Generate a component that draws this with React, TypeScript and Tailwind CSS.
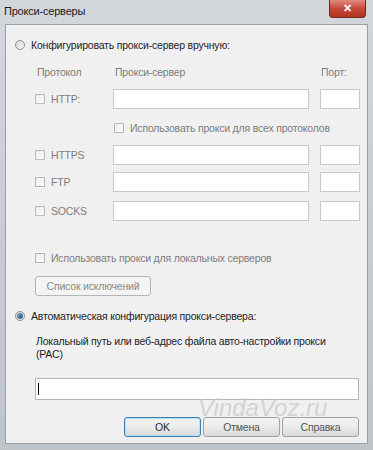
import React from "react";

const font = { fontFamily: '"Liberation Sans", Arial, sans-serif' };

function Checkbox() {
  return (
    <span className="block w-[10px] h-[10px] shrink-0 border border-[#b9b9b9] bg-gradient-to-br from-[#eeeeee] to-[#fafafa]" />
  );
}

function Radio({ checked }: { checked?: boolean }) {
  return (
    <span className="flex items-center justify-center w-[10px] h-[10px] shrink-0 rounded-full border border-[#8f8f8f] bg-gradient-to-br from-[#d9d9d9] to-[#f7f7f7]">
      {checked && (
        <span className="block w-[6px] h-[6px] rounded-full bg-gradient-to-br from-[#7aa6cc] to-[#1d4f7a]" />
      )}
    </span>
  );
}

function Field({ w }: { w: string }) {
  return <div className={`${w} h-[20px] shrink-0 border border-[#c9c9c9] bg-white`} />;
}

function ProtoRow({ label, mt }: { label: string; mt: string }) {
  return (
    <div className={`flex items-center h-[20px] ${mt} pl-[29px]`}>
      <div className="flex items-center gap-[6px] w-[78px] shrink-0">
        <Checkbox />
        <span className="text-[#7d7d7d]">{label}</span>
      </div>
      <Field w="w-[196px]" />
      <div className="w-[11px] shrink-0" />
      <Field w="w-[40px]" />
    </div>
  );
}

function Btn({ children, focus }: { children: React.ReactNode; focus?: boolean }) {
  return (
    <div
      className={`w-[77px] h-[20px] shrink-0 flex items-center justify-center whitespace-nowrap rounded-[3px] border bg-gradient-to-b from-[#f3f3f3] via-[#ebebeb] to-[#d8d8d8] ${
        focus ? "border-[#3c7fb1] shadow-[inset_0_0_0_1px_#b6e0f7] text-[#2a2a2a]" : "border-[#a3a3a3] text-[#555555]"
      }`}
    >
      {children}
    </div>
  );
}

export default function App() {
  return (
    <div
      className="w-[373px] h-[450px] bg-gradient-to-b from-[#d3d7dc] to-[#bfc4c9] flex flex-col overflow-hidden text-[10.5px] leading-none tracking-[-0.2px]"
      style={font}
    >
      {/* title bar */}
      <div className="relative h-[24px] shrink-0">
        <span className="absolute left-[4px] top-[6px] text-[11px] text-[#1a1a1a]">Прокси-серверы</span>
        <div className="absolute right-[7px] top-0 w-[37px] h-[18px] rounded-b-[4px] border border-t-0 border-[#6e2a22] bg-gradient-to-b from-[#e08a7c] via-[#c7493a] to-[#b3341f] flex items-center justify-center">
          <span className="text-white text-[11px] font-bold">✕</span>
        </div>
      </div>

      {/* client area */}
      <div className="relative mx-[5px] h-[420px] border border-[#9aa0a6] bg-[#f0f0f0] flex flex-col shrink-0 text-[#1e1e1e] whitespace-nowrap">
        <div className="flex items-center h-[14px] gap-[6px] pl-[9px] mt-[13px]">
          <Radio />
          <span>Конфигурировать прокси-сервер вручную:</span>
        </div>

        <div className="flex items-center h-[14px] mt-[13px] pl-[31px] text-[#7d7d7d]">
          <span className="w-[78px] shrink-0">Протокол</span>
          <span className="w-[206px] shrink-0">Прокси-сервер</span>
          <span>Порт:</span>
        </div>

        <ProtoRow label="HTTP:" mt="mt-[10px]" />

        <div className="flex items-center h-[14px] gap-[6px] pl-[108px] mt-[12px]">
          <Checkbox />
          <span className="text-[#7d7d7d]">Использовать прокси для всех протоколов</span>
        </div>

        <ProtoRow label="HTTPS" mt="mt-[10px]" />
        <ProtoRow label="FTP" mt="mt-[7px]" />
        <ProtoRow label="SOCKS" mt="mt-[9px]" />

        <div className="flex items-center h-[14px] gap-[6px] pl-[29px] mt-[30px]">
          <Checkbox />
          <span className="text-[#7d7d7d]">Использовать прокси для локальных серверов</span>
        </div>

        <div className="ml-[29px] mt-[11px] w-[116px] h-[20px] flex items-center justify-center rounded-[3px] border border-[#b5b5b5] bg-[#f4f4f4] text-[#8a8a8a]">
          Список исключений
        </div>

        <div className="flex items-center h-[14px] gap-[6px] pl-[9px] mt-[13px]">
          <Radio checked />
          <span>Автоматическая конфигурация прокси-сервера:</span>
        </div>

        <div className="pl-[30px] mt-[12px] h-[26px] leading-[13px]">
          Локальный путь или веб-адрес файла авто-настройки прокси
          <br />
          (PAC)
        </div>

        <div className="ml-[29px] mt-[17px] w-[324px] h-[22px] border border-[#b4b4b4] bg-white flex items-center pl-[2px]">
          <span className="block w-px h-[12px] bg-black" />
        </div>

        <div className="flex gap-[2px] pl-[118px] mt-[17px]">
          <Btn focus>OK</Btn>
          <Btn>Отмена</Btn>
          <Btn>Справка</Btn>
        </div>

        {/* watermark */}
        <span className="absolute left-[192px] top-[371px] text-[24px] italic tracking-normal text-[#c8c8c8] opacity-70 pointer-events-none">
          VindaVoz.ru
        </span>
      </div>
    </div>
  );
}
